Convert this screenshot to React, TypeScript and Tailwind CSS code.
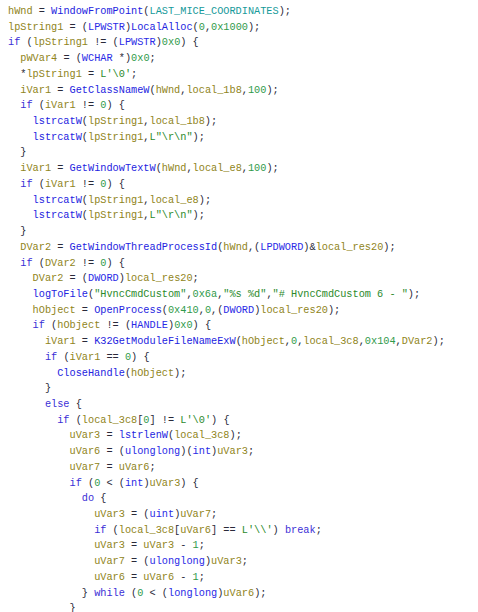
import React from 'react';

const code = `hWnd = WindowFromPoint(LAST_MICE_COORDINATES);
lpString1 = (LPWSTR)LocalAlloc(0,0x1000);
if (lpString1 != (LPWSTR)0x0) {
  pWVar4 = (WCHAR *)0x0;
  *lpString1 = L'\\0';
  iVar1 = GetClassNameW(hWnd,local_1b8,100);
  if (iVar1 != 0) {
    lstrcatW(lpString1,local_1b8);
    lstrcatW(lpString1,L"\\r\\n");
  }
  iVar1 = GetWindowTextW(hWnd,local_e8,100);
  if (iVar1 != 0) {
    lstrcatW(lpString1,local_e8);
    lstrcatW(lpString1,L"\\r\\n");
  }
  DVar2 = GetWindowThreadProcessId(hWnd,(LPDWORD)&local_res20);
  if (DVar2 != 0) {
    DVar2 = (DWORD)local_res20;
    logToFile("HvncCmdCustom",0x6a,"%s %d","# HvncCmdCustom 6 - ");
    hObject = OpenProcess(0x410,0,(DWORD)local_res20);
    if (hObject != (HANDLE)0x0) {
      iVar1 = K32GetModuleFileNameExW(hObject,0,local_3c8,0x104,DVar2);
      if (iVar1 == 0) {
        CloseHandle(hObject);
      }
      else {
        if (local_3c8[0] != L'\\0') {
          uVar3 = lstrlenW(local_3c8);
          uVar6 = (ulonglong)(int)uVar3;
          uVar7 = uVar6;
          if (0 < (int)uVar3) {
            do {
              uVar3 = (uint)uVar7;
              if (local_3c8[uVar6] == L'\\\\') break;
              uVar3 = uVar3 - 1;
              uVar7 = (ulonglong)uVar3;
              uVar6 = uVar6 - 1;
            } while (0 < (longlong)uVar6);
          }`;

const keywords = new Set(['if', 'else', 'do', 'while', 'break']);
const types = new Set(['LPWSTR', 'WCHAR', 'LPDWORD', 'DWORD', 'HANDLE', 'ulonglong', 'int', 'uint', 'longlong']);
const globals = new Set(['LAST_MICE_COORDINATES']);

const colors = {
  kw: 'text-[#3b2fd6]',
  type: 'text-[#2a2ae6]',
  fn: 'text-[#2323e0]',
  var: 'text-[#8f8420]',
  num: 'text-[#2f9a4a]',
  str: 'text-[#2b8a2b]',
  glob: 'text-[#169a9a]',
  punct: 'text-[#2a2a3a]',
};

type Tok = { t: keyof typeof colors; s: string };

const tokenize = (line: string): Tok[] => {
  const out: Tok[] = [];
  const re = /(L?"(?:\\.|[^"])*"|L'(?:\\.|[^'])*'|0x[0-9a-fA-F]+|\d+|[A-Za-z_]\w*|\s+|.)/g;
  let m: RegExpExecArray | null;
  while ((m = re.exec(line))) {
    const s = m[0];
    const next = line[re.lastIndex];
    if (/^L?["']/.test(s)) out.push({ t: 'str', s });
    else if (/^\d/.test(s)) out.push({ t: 'num', s });
    else if (/^[A-Za-z_]/.test(s)) {
      if (keywords.has(s)) out.push({ t: 'kw', s });
      else if (types.has(s)) out.push({ t: 'type', s });
      else if (globals.has(s)) out.push({ t: 'glob', s });
      else if (next === '(') out.push({ t: 'fn', s });
      else out.push({ t: 'var', s });
    } else out.push({ t: 'punct', s });
  }
  return out;
};

const App: React.FC = () => {
  const lines = code.split('\n');
  return (
    <div className="w-[478px] h-[612px] overflow-hidden bg-white pl-[8px] pt-[4px]">
      <div className="font-['Liberation_Mono','Courier_New',monospace] text-[10.25px] leading-[15.72px]">
        {lines.map((line, i) => (
          <div key={i} className="whitespace-pre h-[15.72px]">
            {tokenize(line).map((tok, j) => (
              <span key={j} className={colors[tok.t]}>{tok.s}</span>
            ))}
          </div>
        ))}
      </div>
    </div>
  );
};

export default App;
